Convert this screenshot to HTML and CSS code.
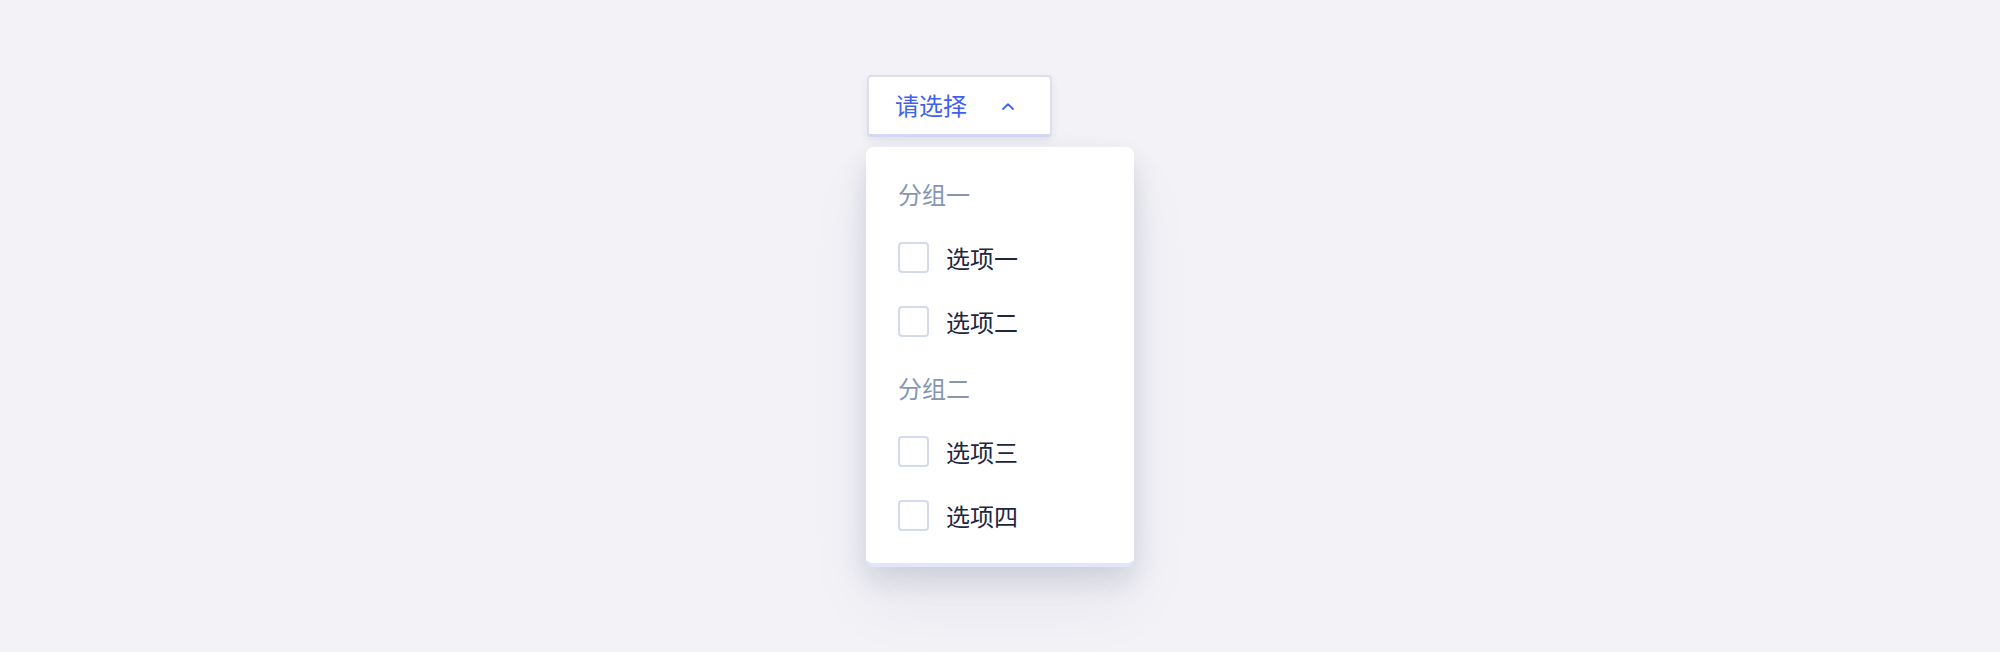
FILE: index.html
```html
<!DOCTYPE html>
<html lang="zh">
<head>
<meta charset="utf-8">
<link rel="stylesheet" href="styles.css">
</head>
<body>
<div class="wrap">
  <button class="trigger">
    <span class="trigger-text">请选择</span>
    <svg class="chev" width="12" height="7" viewBox="0 0 12 7"><path d="M1 6 L6 1.2 L11 6" fill="none" stroke="#3e62ef" stroke-width="1.8" stroke-linecap="round" stroke-linejoin="round"/></svg>
  </button>
  <div class="menu">
    <div class="group">
      <div class="label">分组一</div>
      <div class="item"><span class="box"></span><span class="text">选项一</span></div>
      <div class="item"><span class="box"></span><span class="text">选项二</span></div>
    </div>
    <div class="group">
      <div class="label">分组二</div>
      <div class="item"><span class="box"></span><span class="text">选项三</span></div>
      <div class="item"><span class="box"></span><span class="text">选项四</span></div>
    </div>
  </div>
</div>
</body>
</html>
```

FILE: styles.css
```css
html, body {
  margin: 0;
  padding: 0;
  background: #f2f2f7;
  font-family: "Noto Sans CJK SC", "Noto Sans", sans-serif;
}
body {
  min-height: 100vh;
}
.wrap {
  width: 268px;
  margin: 0 auto;
  padding-top: 75px;
  padding-bottom: 100px;
  display: flex;
  flex-direction: column;
  align-items: flex-start;
}
.trigger {
  box-sizing: border-box;
  width: 185px;
  height: 62px;
  margin-left: 1px;
  background: #fff;
  border: 2px solid #dcdff0;
  border-bottom: 3px solid #d3d9f5;
  border-radius: 4px;
  box-shadow: 0 4px 10px rgba(40, 40, 80, 0.08);
  display: flex;
  align-items: center;
  justify-content: space-between;
  padding: 0 36px 2px 26px;
  font-family: inherit;
  cursor: pointer;
}
.trigger-text {
  font-size: 24px;
  color: #3e62ef;
  line-height: 1;
}
.chev {
  display: block;
  margin-top: 4px;
}
.menu {
  box-sizing: border-box;
  width: 268px;
  margin-top: 10px;
  background: #fff;
  border-radius: 8px;
  border-bottom: 4px solid #dfe5fb;
  box-shadow: 0 14px 28px rgba(20, 20, 50, 0.12), 0 36px 70px rgba(30, 30, 70, 0.05);
  padding: 14px 0 16px;
}
.group + .group {
  margin-top: 2px;
}
.label {
  height: 64px;
  display: flex;
  align-items: center;
  padding-left: 32px;
  font-size: 24px;
  color: #8795b3;
}
.item {
  height: 64px;
  display: flex;
  align-items: center;
  padding-left: 32px;
}
.box {
  box-sizing: border-box;
  width: 31px;
  height: 31px;
  border: 2px solid #d5d9ee;
  border-radius: 4px;
  margin-right: 17px;
  flex: none;
}
.text {
  font-size: 24px;
  color: #1c2742;
}
```
